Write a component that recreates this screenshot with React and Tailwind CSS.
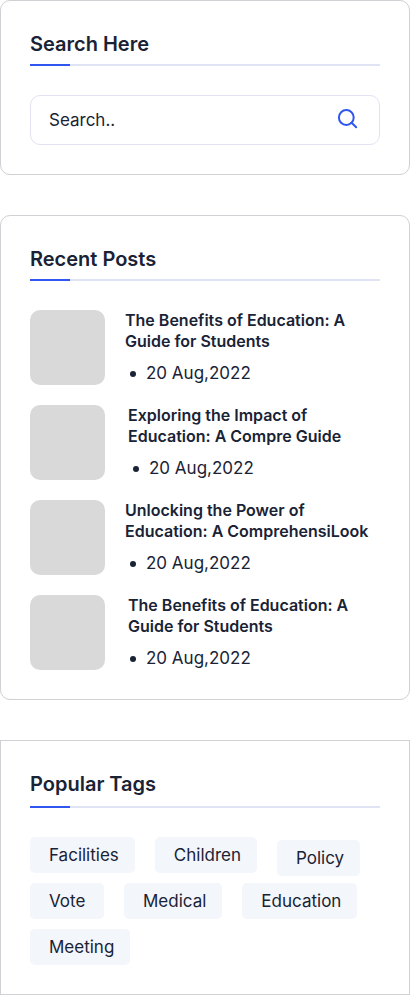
const posts = [
  { title: ['The Benefits of Education: A', 'Guide for Students'], date: '20 Aug,2022', titleInset: false, dateInset: false },
  { title: ['Exploring the Impact of', 'Education: A Compre Guide'], date: '20 Aug,2022', titleInset: true, dateInset: true },
  { title: ['Unlocking the Power of', 'Education: A ComprehensiLook'], date: '20 Aug,2022', titleInset: false, dateInset: false },
  { title: ['The Benefits of Education: A', 'Guide for Students'], date: '20 Aug,2022', titleInset: true, dateInset: false },
];

const tags = [
  { label: 'Facilities' },
  { label: 'Children' },
  { label: 'Policy', lowered: true },
  { label: 'Vote' },
  { label: 'Medical' },
  { label: 'Education' },
  { label: 'Meeting' },
];

function Card({ title, className = '', ruleClassName = 'mt-1.5', children }) {
  return (
    <section className={`border border-[#d0d0d5] bg-white p-[29px] ${className}`}>
      <h2 className="text-xl leading-7 font-semibold">{title}</h2>
      <div className={`mb-[29px] h-0.5 bg-[#e0e3f3] ${ruleClassName}`}>
        <div className="h-full w-10 bg-[#2f57ef]" />
      </div>
      {children}
    </section>
  );
}

function SearchBox() {
  return (
    <form
      className="flex h-[50px] items-center rounded-[10px] border border-[#e2e2f2] pr-5 pl-[18px]"
      onSubmit={(event) => event.preventDefault()}
    >
      <input
        type="text"
        aria-label="Search"
        placeholder="Search.."
        className="min-w-0 flex-1 bg-transparent text-[17px] leading-[22px] outline-none placeholder:text-[#192335] placeholder:opacity-100"
      />
      <button type="submit" aria-label="Submit search" className="text-[#2f57ef]">
        <svg width="22" height="22" viewBox="0 0 22 22" fill="none" stroke="currentColor" strokeWidth="2">
          <circle cx="9.3" cy="8.5" r="7.4" />
          <path d="M14.6 13.8l4.6 4.4" strokeLinecap="round" />
        </svg>
      </button>
    </form>
  );
}

function Post({ post }) {
  return (
    <li className="flex h-[75px] gap-5">
      <div className="size-[75px] shrink-0 rounded-[10px] bg-[#d9d9d9]" />
      <div className="min-w-0 flex-1">
        <h3 className={`text-base leading-[21px] font-semibold whitespace-nowrap ${post.titleInset ? 'pl-[3px]' : ''}`}>
          <a href="#post">
            {post.title[0]}
            <br />
            {post.title[1]}
          </a>
        </h3>
        <p className={`mt-2.5 flex items-center gap-2.5 text-[17px] leading-[22px] ${post.dateInset ? 'pl-2' : 'pl-[5px]'}`}>
          <span className="mt-0.5 size-1.5 rounded-full bg-[#192335]" />
          <time dateTime="2022-08-20">{post.date}</time>
        </p>
      </div>
    </li>
  );
}

export default function App() {
  return (
    <aside className="flex flex-col gap-10 bg-white font-['Inter',sans-serif] text-[#192335]">
      <Card title="Search Here" className="rounded-[10px]">
        <SearchBox />
      </Card>
      <Card title="Recent Posts" className="rounded-[10px]">
        <ul className="flex flex-col gap-5">
          {posts.map((post, index) => (
            <Post key={index} post={post} />
          ))}
        </ul>
      </Card>
      <Card title="Popular Tags" ruleClassName="mt-2">
        <ul className="flex flex-wrap items-start gap-x-5 gap-y-2.5">
          {tags.map((tag) => (
            <li key={tag.label} className={tag.lowered ? 'mt-[3px] -mb-[3px]' : ''}>
              <a href="#tag" className="flex h-9 min-w-[74px] items-center rounded-[5px] bg-[#f3f6fb] pr-4 pl-[19px] text-[17px] leading-[22px]">
                {tag.label}
              </a>
            </li>
          ))}
        </ul>
      </Card>
    </aside>
  );
}
